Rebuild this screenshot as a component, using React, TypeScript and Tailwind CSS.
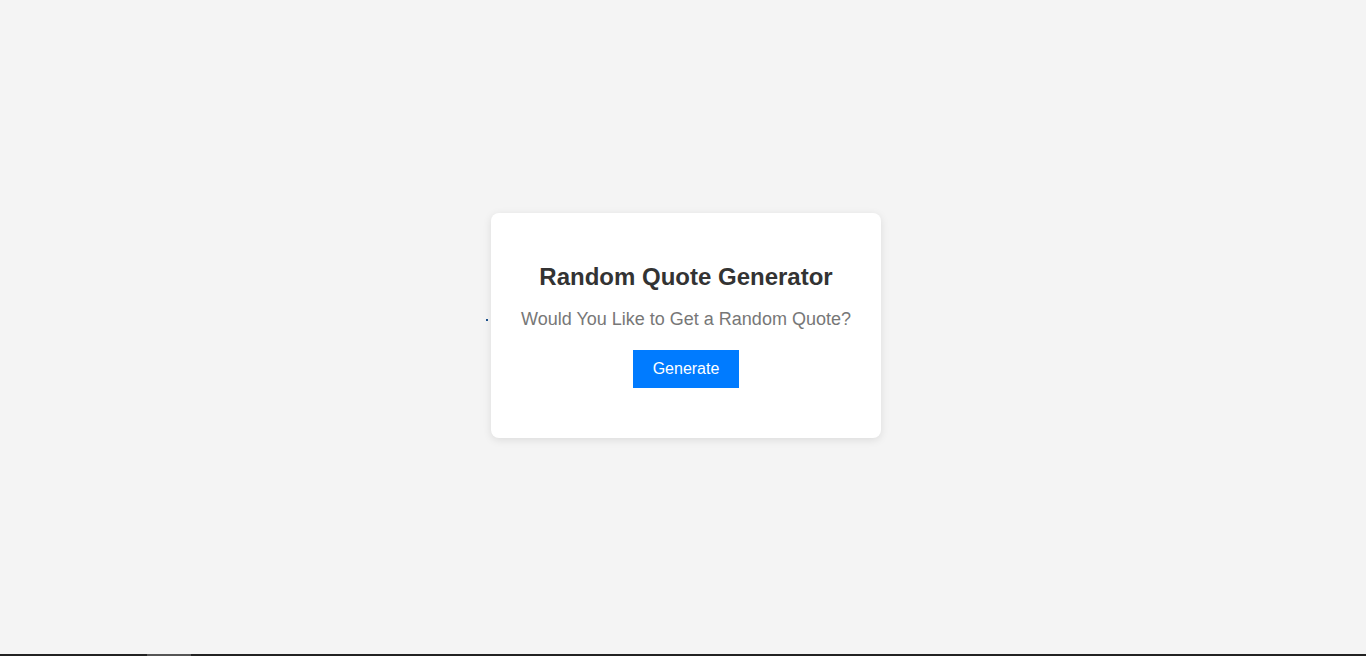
import React from "react";

const App = () => {
  return (
    <div className="flex h-[656px] flex-col bg-[#f4f4f4]" style={{ fontFamily: '"Liberation Sans", Arial, sans-serif' }}>
      <div className="flex flex-1 items-center justify-center pb-[3px] pl-[6px]">
        <div className="relative w-[390px] rounded-lg bg-white pt-[50px] pb-[50px] text-center shadow-[0_2px_8px_rgba(0,0,0,0.1)]">
          <span className="absolute left-[-5px] top-[106px] h-[2px] w-[2px] bg-[#1a4f8a]" />
          <h1 className="text-[24px] font-bold leading-[28px] text-[#333]">Random Quote Generator</h1>
          <p className="mt-[18px] text-[18px] leading-[21px] text-[#777]">Would You Like to Get a Random Quote?</p>
          <button className="mt-[20px] bg-[#007bff] px-[20px] py-[10px] text-[16px] leading-[18px] text-white">
            Generate
          </button>
        </div>
      </div>
      <div className="flex h-[2px] bg-[#222]">
        <div className="ml-[147px] w-[44px] bg-[#555]" />
      </div>
    </div>
  );
};

export default App;
